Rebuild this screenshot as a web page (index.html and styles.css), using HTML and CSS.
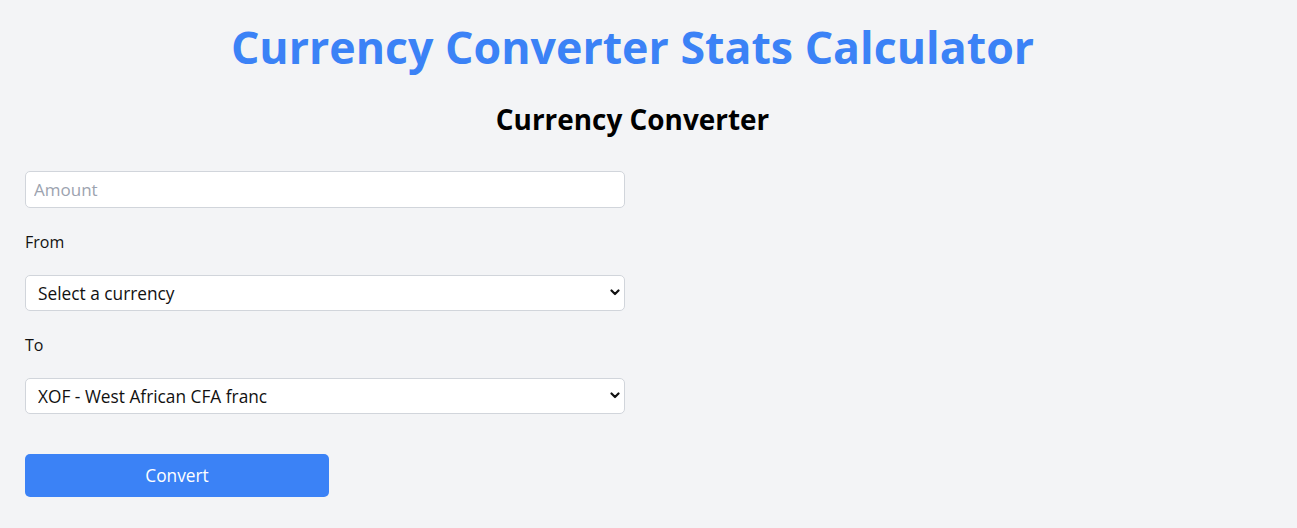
FILE: index.html
```html
<!DOCTYPE html>
<html lang="en">
<head>
<meta charset="utf-8">
<title>Currency Converter Stats Calculator</title>
<link rel="stylesheet" href="styles.css">
</head>
<body>
<div class="page">
  <header class="head">
    <h1 class="title">Currency Converter Stats Calculator</h1>
    <h2 class="subtitle">Currency Converter</h2>
  </header>
  <form class="form">
    <input class="field amount" type="text" placeholder="Amount">
    <label class="label">From</label>
    <div class="select-wrap">
      <select class="field select">
        <option>Select a currency</option>
      </select>
      <svg class="chev" width="10" height="7" viewBox="0 0 10 7"><path d="M1.5 1.5 L5 5 L8.5 1.5" fill="none" stroke="#111" stroke-width="2.2" stroke-linecap="round" stroke-linejoin="round"/></svg>
    </div>
    <label class="label">To</label>
    <div class="select-wrap">
      <select class="field select">
        <option>XOF - West African CFA franc</option>
      </select>
      <svg class="chev" width="10" height="7" viewBox="0 0 10 7"><path d="M1.5 1.5 L5 5 L8.5 1.5" fill="none" stroke="#111" stroke-width="2.2" stroke-linecap="round" stroke-linejoin="round"/></svg>
    </div>
    <button class="btn" type="button">Convert</button>
  </form>
</div>
</body>
</html>
```
FILE: styles.css
```css
html, body {
  margin: 0;
  background: #f3f4f6;
}
body {
  font-family: "Open Sans", "Noto Sans", sans-serif;
  color: #111;
}
.page {
  padding: 20px 25px 0 25px;
}
.head {
  padding-right: 32px;
}
.title {
  margin: 0;
  height: 56px;
  line-height: 54px;
  text-align: center;
  color: #3b82f6;
  font-size: 44.7px;
  font-weight: 700;
}
.subtitle {
  margin: 27px 0 0;
  line-height: 32px;
  text-align: center;
  font-size: 27.9px;
  font-weight: 700;
  color: #000;
}
.form {
  margin-top: 36px;
  width: 600px;
  display: flex;
  flex-direction: column;
  align-items: flex-start;
}
.field {
  box-sizing: border-box;
  width: 600px;
  background: #fff;
  border: 1px solid #d1d5db;
  border-radius: 5px;
  font-family: inherit;
  font-size: 17px;
  color: #111;
  outline: none;
  margin: 0;
}
.amount {
  height: 37px;
  padding: 0 8px;
}
.amount::placeholder {
  color: #9ca3af;
}
.label {
  display: block;
  margin-top: 22px;
  line-height: 24px;
  font-size: 16px;
  color: #111;
}
.select-wrap {
  position: relative;
  margin-top: 21px;
  width: 600px;
}
.select {
  display: block;
  height: 36px;
  padding: 0 30px 0 12px;
  font-size: 17.3px;
  appearance: none;
  -webkit-appearance: none;
}
.chev {
  position: absolute;
  right: 5px;
  top: 14px;
  pointer-events: none;
}
.btn {
  margin-top: 40px;
  width: 304px;
  height: 43px;
  border: none;
  border-radius: 5px;
  background: #3b82f6;
  color: #fff;
  font-family: inherit;
  font-size: 17.3px;
  cursor: pointer;
}
```
